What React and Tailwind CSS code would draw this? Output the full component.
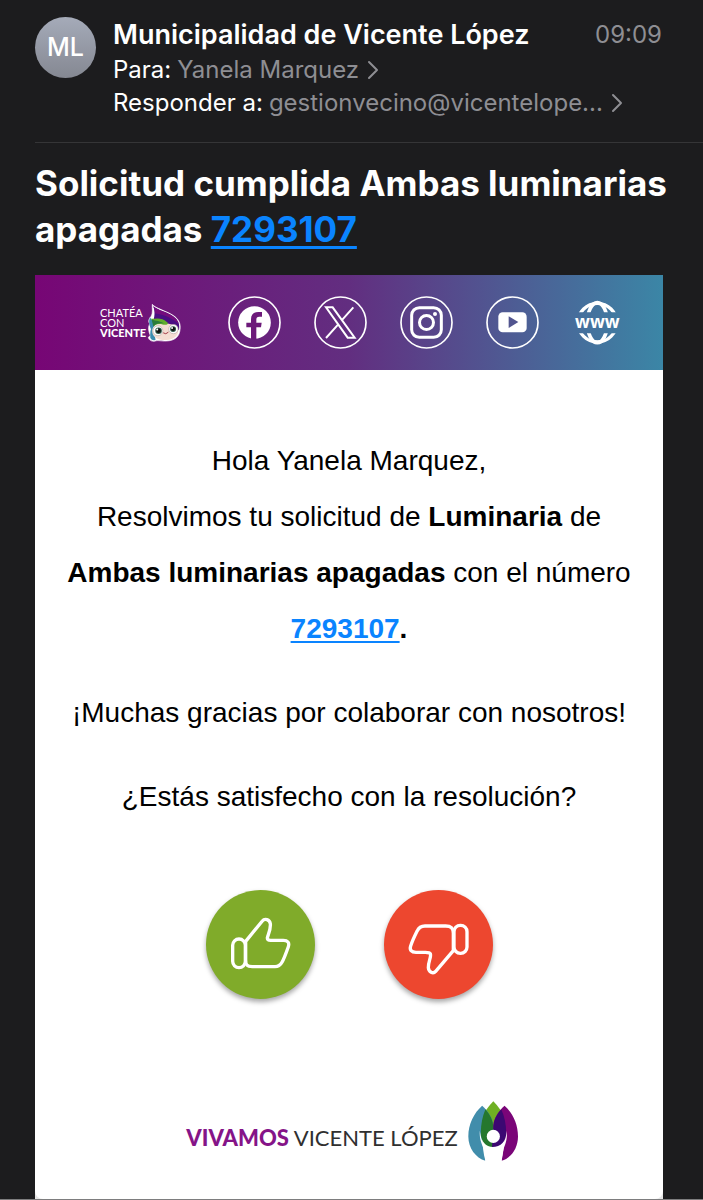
import React from "react";

function Mascot() {
  return (
    <svg viewBox="203 34 106 118" className="h-[39px] w-[35px] shrink-0" aria-hidden="true">
      <path d="M219 38 C228 50 262 58 283 72 C298 82 306 96 303 115 C301 135 288 148 262 149 C244 150 238 146 228 149 C218 152 208 146 207 138 L213 132 C207 120 206 106 211 97 C206 90 209 80 215 75 C222 66 218 50 219 38Z" fill="#fff" stroke="#fff" strokeWidth="2" strokeLinejoin="round" />
      <path d="M222 44 C238 57 264 61 282 74 C298 85 303 98 300 116 L272 108 L222 88 C228 70 226 56 222 44Z" fill="#4b0f83" />
      <path d="M222 44 C238 57 264 61 282 74 C290 79 296 87 299 97 C280 80 256 70 228 66 C227 58 225 51 222 44Z" fill="#740d7c" />
      <path d="M212 78 C207 90 210 105 217 116 L229 99 Z" fill="#3b8db0" />
      <path d="M213 139 C212 125 213 112 220 103 L229 145 C222 149 215 145 213 139Z" fill="#3b8db0" />
      <path d="M219 114 C225 92 280 90 297 110 C302 132 284 146 262 146 C236 147 216 137 219 114Z" fill="#f4ddd2" />
      <path d="M215 82 C230 82 248 76 265 93 C270 98 260 102 250 99 C237 94 225 102 222 105 C223 95 220 88 215 82Z" fill="#62ad2c" />
      <path d="M217 84 C232 89 242 88 254 96 C240 94 230 96 222 104Z" fill="#2b7c3d" />
      <circle cx="236" cy="118" r="15" fill="#fff" stroke="#b8aaa6" strokeWidth="2" />
      <circle cx="283" cy="113" r="14" fill="#fff" stroke="#b8aaa6" strokeWidth="2" />
      <circle cx="238" cy="118" r="10" fill="#2c5a48" />
      <circle cx="282" cy="113" r="9" fill="#2c5a48" />
      <circle cx="238" cy="118" r="7" fill="#111" />
      <circle cx="282" cy="113" r="6" fill="#111" />
      <circle cx="234" cy="114" r="3" fill="#fff" />
      <circle cx="279" cy="110" r="3" fill="#fff" />
      <path d="M253 125 Q260 131 267 123" fill="none" stroke="#a43d48" strokeWidth="3" strokeLinecap="round" />
    </svg>
  );
}

function Chevron() {
  return (
    <svg viewBox="0 0 12 20" className="h-5 w-3 shrink-0" fill="none" stroke="currentColor" strokeWidth="2" strokeLinecap="round" strokeLinejoin="round" aria-hidden="true">
      <path d="M2 2 L10 10 L2 18" />
    </svg>
  );
}

function Ring({ label, children }) {
  return (
    <a href="#" aria-label={label} className="block size-[53px] shrink-0 text-white">
      <svg viewBox="0 0 159 159" className="size-full" fill="none" stroke="currentColor" aria-hidden="true">
        <circle cx="79.5" cy="79.5" r="76.5" strokeWidth="5" />
        {children}
      </svg>
    </a>
  );
}

function Globe() {
  return (
    <svg viewBox="11 4 159 159" className="size-full" fill="none" stroke="currentColor" strokeWidth="10" aria-hidden="true">
      <defs>
        <clipPath id="globe-caps">
          <path d="M0 0 H174 V53 H0Z M0 116 H174 V168 H0Z" />
        </clipPath>
      </defs>
      <g clipPath="url(#globe-caps)">
        <circle cx="87" cy="84" r="58" />
        <ellipse cx="87" cy="84" rx="30" ry="60" strokeWidth="11" />
      </g>
      <text x="87" y="99" textAnchor="middle" fontFamily="Open Sans, sans-serif" fontWeight="700" fontSize="52" fill="currentColor" stroke="none">www</text>
    </svg>
  );
}

function FlowerLogo() {
  return (
    <svg viewBox="15 12 152 184" className="h-[61px] w-[50px] shrink-0" aria-hidden="true">
      <path d="M92 12 C106 26 120 44 127 66 L120 110 L64 110 L57 66 C64 44 78 26 92 12Z" fill="#6fb023" />
      <path d="M58 26 C76 42 90 62 92 86 L90 110 L58 128 C60 150 62 172 68 193 C38 184 16 154 16 119 C16 82 33 48 58 26Z" fill="#418dab" />
      <path d="M126 26 C108 42 94 62 92 86 L94 110 L126 128 C124 150 122 172 117 193 C147 184 167 154 167 119 C167 82 151 48 126 26Z" fill="#7a0578" />
      <path d="M68 36 C83 53 91 70 92 88 L92 151 C68 151 54 134 54 108 C54 82 59 57 68 36Z" fill="#25772d" />
      <path d="M116 36 C101 53 93 70 92 88 L88 151 C116 151 131 134 131 108 C131 82 126 57 116 36Z" fill="#3c0872" />
      <path d="M51 102 C54 124 58 140 72 149 C84 157 101 157 112 149 C126 140 131 122 133 102 C135 124 130 141 124 154 C120 168 118 181 117 195 H68 C67 181 66 168 62 154 C56 141 49 124 51 102Z" fill="#fff" />
      <circle cx="92" cy="119" r="20" fill="#fff" />
    </svg>
  );
}

function VoteButton({ label, className, children }) {
  return (
    <button type="button" aria-label={label} className={"size-[109px] rounded-full text-white shadow-[0_3px_5px_rgba(0,0,0,0.35)] " + className}>
      <svg viewBox="0 0 327 327" className="size-full" fill="none" stroke="currentColor" strokeWidth="10" strokeLinecap="round" strokeLinejoin="round" aria-hidden="true">
        {children}
      </svg>
    </button>
  );
}

export default function App() {
  return (
    <main className="min-h-screen bg-[#1c1c1e] font-['Inter',sans-serif] text-white">
      <header className="ml-[35px] flex gap-[17px] border-b border-[#353537] pt-[17px] pr-[41px] pb-[23px]">
        <div className="flex size-[61px] shrink-0 items-center justify-center rounded-full bg-linear-to-b from-[#a5abb9] to-[#858892] text-[25px] font-medium">ML</div>
        <div className="min-w-0 grow">
          <div className="flex items-center justify-between leading-9">
            <span className="text-[27px] font-semibold">Municipalidad de Vicente López</span>
            <time className="text-[24px] text-[#8e8e93]">09:09</time>
          </div>
          <p className="flex items-center text-[24px] leading-[33px]">
            Para:
            <a href="#" className="ml-[6px] flex items-center gap-2 text-[#8e8e93]">
              Yanela Marquez <Chevron />
            </a>
          </p>
          <p className="flex items-center text-[24px] leading-[33px]">
            Responder a:
            <a href="#" className="ml-[6px] flex items-center gap-2 text-[#8e8e93]">
              gestionvecino@vicentelope... <Chevron />
            </a>
          </p>
        </div>
      </header>

      <h1 className="pt-[17px] pr-9 pb-[23px] pl-[35px] text-[35px] leading-[46px] font-bold">
        Solicitud cumplida Ambas luminarias apagadas{" "}
        <a href="#" className="text-[#0a84ff] underline decoration-[3px] underline-offset-4">7293107</a>
      </h1>

      <div className="border-b border-[#7d7d7e]">
        <article className="mr-10 ml-[35px] bg-[#e6e6e6] text-black">
          <nav className="flex items-center gap-[33px] bg-linear-to-r/srgb from-[#770675] via-[#622e80] via-50% to-[#3b86a6] py-[21px] pr-[39px] pl-[65px]">
            <a href="#" className="flex w-[95px] shrink-0 items-center gap-px font-['Lato',sans-serif] text-[11px] leading-[10px] text-white">
              <span className="flex flex-col">
                <span>CHATÉA</span>
                <span>CON</span>
                <b className="font-black">VICENTE</b>
              </span>
              <Mascot />
            </a>
            <Ring label="Facebook">
              <circle cx="79.5" cy="79.5" r="49" fill="currentColor" stroke="none" />
              <path d="M69 130 V94 H55 V80 H69 V70 C69 55 78 48 91 48 H102 V62 H94 C87 62 85 65 85 71 V80 H101 L99 94 H85 V130Z" fill="#6d1a7a" stroke="none" />
            </Ring>
            <Ring label="X">
              <path d="M36 34 H56 L122 125 H101Z M118 34 L83 73 M72 86 L36 126" strokeWidth="6" />
            </Ring>
            <Ring label="Instagram">
              <rect x="35" y="35" width="89" height="89" rx="23" strokeWidth="9" />
              <circle cx="79.5" cy="79.5" r="21" strokeWidth="9" />
              <circle cx="105" cy="54" r="6" fill="currentColor" stroke="none" />
            </Ring>
            <Ring label="YouTube">
              <rect x="37" y="49" width="85" height="60" rx="13" fill="currentColor" stroke="none" />
              <path d="M68 61 L97 78 L68 96Z" fill="#52558f" stroke="none" />
            </Ring>
            <a href="#" className="block size-[53px] shrink-0 text-white">
              <Globe />
            </a>
          </nav>

          <div className="rounded-b-lg bg-white pb-[37px]">
            <div className="flex flex-col gap-7 px-7 pt-[63px] text-center font-['Liberation_Sans',sans-serif] text-[28px] leading-[56px]">
              <div>
                <p>Hola Yanela Marquez,</p>
                <p>
                  Resolvimos tu solicitud de <b>Luminaria</b> de <b>Ambas luminarias apagadas</b> con el número{" "}
                  <b><a href="#" className="text-[#0a84ff] underline decoration-2 underline-offset-3">7293107</a>.</b>
                </p>
              </div>
              <p>¡Muchas gracias por colaborar con nosotros!</p>
              <p>¿Estás satisfecho con la resolución?</p>
            </div>

            <div className="flex justify-center gap-[69px] pt-[65px]">
              <VoteButton label="Sí, estoy satisfecho" className="bg-[#80ab2a]">
                <rect x="80" y="147" width="38" height="86" rx="19" />
                <path d="M119 154 L169 93 C176 84 191 88 193 101 C195 119 185 136 184 144 C184 149 187 151 194 151 H232 C245 151 251 158 247 170 C241 187 235 204 228 217 C223 226 216 230 207 230 H139 C123 230 119 225 119 210Z" />
              </VoteButton>
              <VoteButton label="No, no estoy satisfecho" className="bg-[#ed472f]">
                <rect x="210" y="106" width="39" height="84" rx="19" />
                <path d="M208 182 L155 244 C147 253 134 246 133 233 C132 216 143 200 139 191 C137 187 130 187 124 187 H96 C82 187 76 180 80 168 C85 153 92 138 99 124 C104 113 112 108 123 108 H185 C202 108 208 115 208 130Z" />
              </VoteButton>
            </div>

            <footer className="flex items-center justify-center gap-[10px] pt-[102px] pl-[6px]">
              <p className="pt-3 font-['Lato',sans-serif] text-[22px] leading-7 whitespace-nowrap text-[#303030]">
                <b className="font-black text-[#851488]">VIVAMOS</b> VICENTE LÓPEZ
              </p>
              <FlowerLogo />
            </footer>
          </div>
        </article>
      </div>
    </main>
  );
}
